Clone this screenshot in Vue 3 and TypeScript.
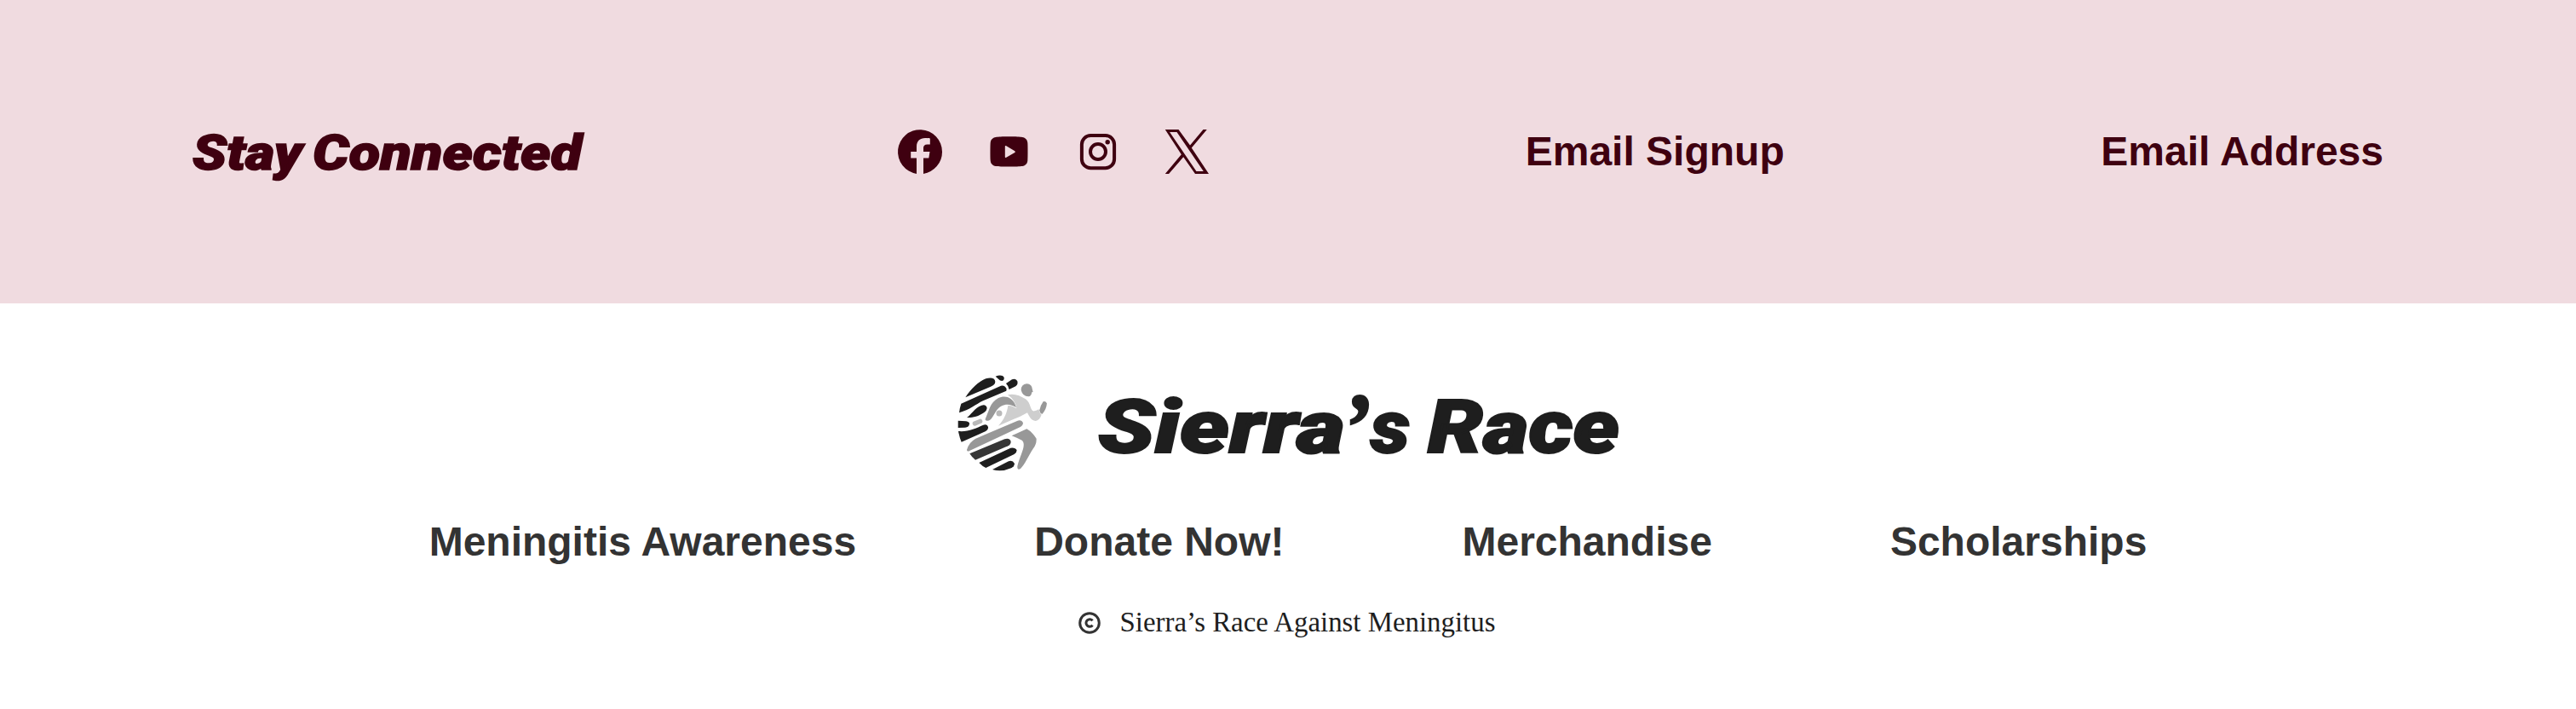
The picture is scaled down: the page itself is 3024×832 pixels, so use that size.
<script setup lang="ts">
interface Word { text: string; x: number; length: number }

const stayWords: Word[] = [
  { text: 'Stay', x: 1, length: 129 },
  { text: 'Connected', x: 142, length: 316 },
]
const brandWords: Word[] = [
  { text: 'Sierra', x: 0, length: 290 },
  { text: '’', x: 285, length: 36 },
  { text: 's', x: 320, length: 46 },
  { text: 'Race', x: 387, length: 225 },
]
const links: string[] = ['Meningitis Awareness', 'Donate Now!', 'Merchandise', 'Scholarships']
</script>

<template>
  <footer class="footer">
    <section class="connect">
      <svg class="stay" viewBox="0 0 459 70" role="heading">
        <text v-for="w in stayWords" :key="w.text" :x="w.x" y="56" :textLength="w.length" lengthAdjust="spacingAndGlyphs">{{ w.text }}</text>
      </svg>
      <div class="social">
        <svg viewBox="0 0 52 52" aria-label="Facebook">
          <path d="M52 26.2A26 26 0 1 0 22 51.9V33.4H15.2V26H22V20.2C22 13.500 26 10 32 10C34.800 10 37.800 10.400 37.800 10.400V17.600H34.600C31.300 17.600 30 19.500 30 21.800V26H37.500L36.300 33.400H30V51.900A26 26 0 0 0 52 26.200Z" />
        </svg>
        <svg viewBox="0 0 52 52" aria-label="YouTube">
          <path fill-rule="evenodd" d="M26.500 8.300C34.500 8.300 39.500 8.600 42 9C46 9.800 47.900 11.800 48.300 15.500C48.600 18.500 48.600 33.500 48.300 36.500C47.900 40.200 46 42.200 42 43C37.500 43.700 15.500 43.700 11 43C7 42.200 5.100 40.200 4.700 36.500C4.400 33.500 4.400 18.500 4.700 15.500C5.100 11.800 7 9.800 11 9C13.500 8.600 18.500 8.300 26.500 8.300ZM21.800 20V32Q21.800 33.600 23.300 32.800L33.300 27Q34.500 26.100 33.300 25.200L23.300 19.300Q21.800 18.600 21.800 20Z" />
        </svg>
        <svg viewBox="0 0 52 52" aria-label="Instagram">
          <rect class="line" x="6.900" y="7" width="38.200" height="38.200" rx="10.500" />
          <circle class="line" cx="26" cy="26" r="9" />
          <circle cx="37.200" cy="14.700" r="2.700" />
        </svg>
        <svg viewBox="0 0 52 52" aria-label="X">
          <path fill-rule="evenodd" d="M.8 0H16.500L30 18.500L45.500 0H49.800L31.800 21.500L52 52H36L22.200 32.300L5.100 52H.8L19.800 29.200ZM6.100 3L37.400 49H45.800L14.500 3Z" />
        </svg>
      </div>
      <a class="link">Email Signup</a>
      <a class="link">Email Address</a>
    </section>

    <section class="main">
      <div class="brand">
        <svg class="mark" viewBox="40 40 316 344" aria-label="Runner">
          <g fill="#1e1e1e">
            <path d="M68 122C88 91 114 67 140 56Q158 50 169 57Q177 67 169 77Q165 81 157 84Z" />
            <path d="M174 48Q188 42 199 46L204 51Q206 61 197 64Q190 64 184 57Z" />
            <path d="M53 144L193 81Q207 78 213 92L212 99L130 134C105 146 83 166 46 176Q48 158 53 144Z" />
            <path d="M211 73L232 59Q246 54 251 65Q254 77 245 83L222 94Q220 82 211 73Z" />
            <path d="M73 193C87 185 100 158 125 150Q141 145 144 160Q143 169 134 175C113 190 91 194 73 193Z" />
            <path d="M42 204L70 206Q83 208 82 216Q80 226 67 228L42 229Z" />
            <path d="M43 241C78 244 104 231 131 219Q145 215 148 227Q149 236 138 242L54 279Q47 263 43 241Z" />
            <path d="M116 352L227 300Q243 297 249 308Q249 317 240 322L140 370Q127 364 116 352Z" />
            <path d="M163 376L220 347Q234 342 241 355Q240 366 229 371Q195 386 163 376Z" />
          </g>
          <path fill="#363636" d="M83 320L206 269Q223 263 228 277Q229 287 218 293L103 342Q91 333 83 320Z" />
          <g fill="#989898">
            <path d="M73 307Q79 281 104 267L252 204Q266 200 271 212Q271 221 260 227L84 309Q74 315 73 307Z" />
            <path d="M138 198C151 172 154 140 183 125C211 111 240 126 247 158C224 141 195 143 177 169C165 188 158 204 147 204Q137 204 138 198Z" />
            <path d="M284 74Q303 75 304 95L306 103L302 104Q301 115 295 118Q270 121 264 96Q264 77 284 74Z" />
            <path d="M342 137Q349 133 355 143C354 156 349 170 339 180Q331 181 329 167Q333 149 342 137Z" />
            <path d="M231 257L284 233Q302 242 318 267Q319 286 307 302C290 328 276 361 262 373Q250 380 251 364C260 325 285 289 267 273Q253 266 231 257Z" />
          </g>
          <path fill="#cecece" d="M217 113C238 107 261 115 280 128C301 144 295 172 311 170Q320 169 326 164Q329 178 336 183Q329 203 315 205C299 205 291 185 286 176Q261 191 237 199L184 222C204 200 214 179 218 151Q230 149 248 161Q244 132 217 113Z" />
          <path class="dash" d="M101 214L120 206" />
          <circle fill="#b9b9b9" cx="187" cy="178" r="10.500" />
        </svg>
        <svg class="wordmark" viewBox="0 0 620 100" role="heading">
          <text v-for="w in brandWords" :key="w.text" :class="{ apostrophe: w.text === '’' }" :x="w.x" :y="w.text === '’' ? 87 : 79" :textLength="w.length" lengthAdjust="spacingAndGlyphs">{{ w.text }}</text>
        </svg>
      </div>
      <nav class="links">
        <a v-for="l in links" :key="l">{{ l }}</a>
      </nav>
      <div class="legal">
        <svg class="copy" viewBox="0 0 26 26" aria-label="Copyright">
          <circle cx="13" cy="13" r="11.300" />
          <path d="M16.600 10.300A4.300 4.300 0 1 0 16.600 15.700" />
        </svg>
        <svg class="legal-text" viewBox="0 0 440 44">
          <text x="-1.500" y="31.500" textLength="441" lengthAdjust="spacingAndGlyphs">Sierra’s Race Against Meningitus</text>
        </svg>
      </div>
    </section>
  </footer>
</template>

<style>
body { margin: 0; background: #fff; }
</style>

<style scoped>
.footer { height: 832px; font-family: "Liberation Sans", Arial, sans-serif; background: #fff; overflow: hidden; }
.connect { box-sizing: border-box; height: 356px; padding: 0 226px 0 225px; display: flex; align-items: center; justify-content: space-between; background: #f0dbe0; color: #3f0010; }
.stay { width: 459px; height: 70px; overflow: visible; }
.stay text, .wordmark text { font-family: Roboto, sans-serif; font-weight: 900; font-style: italic; fill: currentColor; stroke: currentColor; }
.stay text { font-size: 57px; stroke-width: 1.500px; }
.social { display: flex; gap: 52.500px; margin-left: -2px; }
.social svg { width: 52px; height: 52px; fill: currentColor; overflow: visible; }
.social .line { fill: none; stroke: currentColor; stroke-width: 4px; }
.link { font-size: 48px; line-height: 55px; font-weight: 700; white-space: nowrap; padding-bottom: 2px; }
.main { display: flex; flex-direction: column; align-items: center; padding-top: 83px; }
.brand { display: flex; height: 113px; width: 776px; color: #1e1e1e; }
.mark { width: 105.300px; height: 114.700px; flex: none; }
.mark .dash { stroke: #b9b9b9; stroke-width: 16px; stroke-linecap: round; }
.wordmark { width: 620px; height: 100px; margin: 13px 0 0 60px; overflow: visible; flex: none; }
.wordmark text { font-size: 87px; stroke-width: 2px; }
.wordmark .apostrophe { font-family: "Liberation Serif", serif; font-weight: 700; font-size: 112px; }
.links { display: flex; gap: 209px; margin-top: 56px; font-size: 48px; line-height: 55px; font-weight: 700; color: #333; white-space: nowrap; }
.legal { display: flex; align-items: center; gap: 24px; margin: 46px 2px 0 0; height: 44px; }
.copy { width: 26px; height: 26px; fill: none; stroke: #333; stroke-width: 3px; }
.legal-text { width: 440px; height: 44px; overflow: visible; }
.legal-text text { font-family: "Liberation Serif", serif; font-size: 34px; fill: #1e1e1e; }
</style>
